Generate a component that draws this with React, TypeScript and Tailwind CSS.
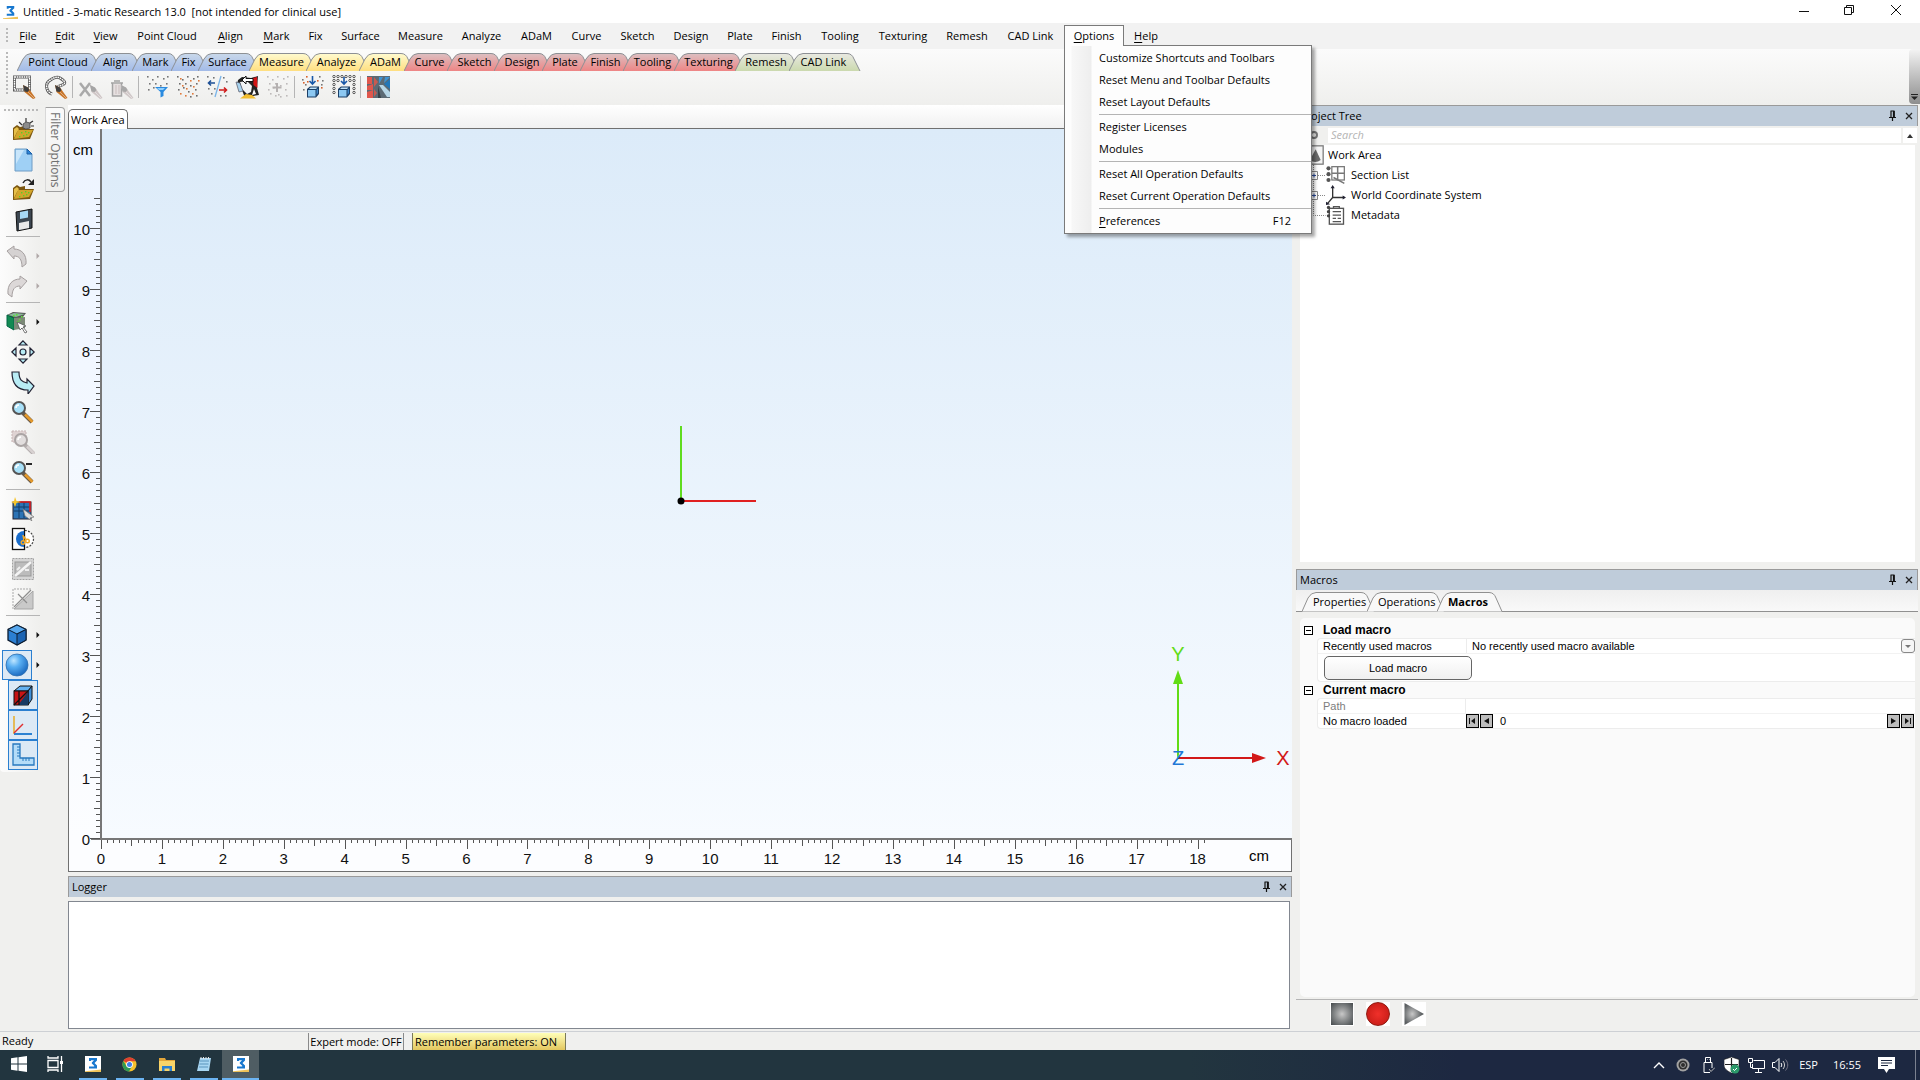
import React from "react";

const UI = "font-['Open_Sans','Noto_Sans',sans-serif]";
const ARIAL = "font-['Liberation_Sans',Arial,sans-serif]";

/* ---------- data ---------- */

const MENUS: { label: string; w: string; key?: boolean }[] = [
  { label: "File", w: "w-[36px]", key: true },
  { label: "Edit", w: "w-[38px]", key: true },
  { label: "View", w: "w-[43px]", key: true },
  { label: "Point Cloud", w: "w-[80px]" },
  { label: "Align", w: "w-[47px]", key: true },
  { label: "Mark", w: "w-[45px]", key: true },
  { label: "Fix", w: "w-[33px]" },
  { label: "Surface", w: "w-[57px]" },
  { label: "Measure", w: "w-[63px]" },
  { label: "Analyze", w: "w-[59px]" },
  { label: "ADaM", w: "w-[51px]" },
  { label: "Curve", w: "w-[49px]" },
  { label: "Sketch", w: "w-[53px]" },
  { label: "Design", w: "w-[54px]" },
  { label: "Plate", w: "w-[44px]" },
  { label: "Finish", w: "w-[49px]" },
  { label: "Tooling", w: "w-[58px]" },
  { label: "Texturing", w: "w-[68px]" },
  { label: "Remesh", w: "w-[60px]" },
  { label: "CAD Link", w: "w-[67px]" },
];

const OPTION_GROUPS: string[][] = [
  ["Customize Shortcuts and Toolbars", "Reset Menu and Toolbar Defaults", "Reset Layout Defaults"],
  ["Register Licenses", "Modules"],
  ["Reset All Operation Defaults", "Reset Current Operation Defaults"],
];

type Tone = "blue" | "yellow" | "red" | "green";
const TABS: { label: string; w: number; tone: Tone }[] = [
  { label: "Point Cloud", w: 74, tone: "blue" },
  { label: "Align", w: 41, tone: "blue" },
  { label: "Mark", w: 39, tone: "blue" },
  { label: "Fix", w: 27, tone: "blue" },
  { label: "Surface", w: 51, tone: "blue" },
  { label: "Measure", w: 57, tone: "yellow" },
  { label: "Analyze", w: 53, tone: "yellow" },
  { label: "ADaM", w: 45, tone: "yellow" },
  { label: "Curve", w: 43, tone: "red" },
  { label: "Sketch", w: 47, tone: "red" },
  { label: "Design", w: 48, tone: "red" },
  { label: "Plate", w: 38, tone: "red" },
  { label: "Finish", w: 43, tone: "red" },
  { label: "Tooling", w: 51, tone: "red" },
  { label: "Texturing", w: 61, tone: "red" },
  { label: "Remesh", w: 54, tone: "green" },
  { label: "CAD Link", w: 61, tone: "green" },
];
const TONES: Record<Tone, [string, string]> = {
  blue: ["#c9d8ea", "#a3bbe8"],
  yellow: ["#fffbd0", "#ffdf80"],
  red: ["#dcc0c2", "#ee8585"],
  green: ["#e9e9e2", "#cbd9ae"],
};

/* ---------- small helpers ---------- */

function Svg({ size = 24, children }: { size?: number; children: React.ReactNode }) {
  return (
    <svg width={size} height={size} viewBox="0 0 24 24" fill="none" aria-hidden="true" className="block shrink-0">
      {children}
    </svg>
  );
}

function Dots({ at, fill, s = 1.6 }: { at: [number, number][]; fill: string; s?: number }) {
  return (
    <>
      {at.map(([x, y], i) => (
        <rect key={i} x={x} y={y} width={s} height={s} fill={fill} />
      ))}
    </>
  );
}

function Brush({ body = "#c8762a", dark = "#3f3f3f" }: { body?: string; dark?: string }) {
  return (
    <g>
      <path d="M11 10l5 2.5 7.5 10.5-2.5 1-8.500-7z" fill={body} />
      <path d="M11 10l5 2.500 1.500 2.500-2 2-3-.5z" fill={dark} />
      <path d="M16 17l6 6" stroke="#fff" strokeOpacity=".4" />
    </g>
  );
}

function Arrow({ dim }: { dim?: boolean }) {
  return (
    <svg width="4" height="6" viewBox="0 0 4 6" className="ml-[4px]" aria-hidden="true">
      <path d="M.5 0L3.500 3L.5 6z" fill={dim ? "#b0a8a8" : "#111"} />
    </svg>
  );
}

function MaticLogo({ size = 16 }: { size?: number }) {
  return (
    <svg width={size} height={size} viewBox="0 0 16 16" aria-hidden="true" className="block shrink-0">
      <rect width="16" height="16" fill="#fff" />
      <path d="M4 2H12V4.500L9.500 7L12 9.500V12.500H4V10.500H9.200V9.800L6.800 7.600V6.600L9 4.200H6V5H4z" fill="#1878cf" />
      <path d="M0 15.200L16 13.600V16H0z" fill="#eec258" />
    </svg>
  );
}

function Pin() {
  return (
    <svg width="9" height="11" viewBox="0 0 9 11" aria-hidden="true">
      <path d="M2.500 1h4M3 1v6M5.500 1v6M6.300 1v6M1 7.500h7M4.500 8v3" stroke="#111" strokeWidth="1.200" fill="none" />
    </svg>
  );
}
function Cross() {
  return (
    <svg width="8" height="8" viewBox="0 0 8 8" aria-hidden="true">
      <path d="M1 1l6 6M7 1L1 7" stroke="#222" strokeWidth="1.300" />
    </svg>
  );
}

function PanelHeader({ title }: { title: string }) {
  return (
    <header className="flex h-[21px] shrink-0 items-center border border-b-0 border-[#9a9a9a] bg-[#bfccda] pr-[4px] pb-px pl-[3px]">
      <h2 className="flex-1 text-[11px] leading-4">{title}</h2>
      <button aria-label={`Pin ${title}`} className="mr-[8px]"><Pin /></button>
      <button aria-label={`Close ${title}`}><Cross /></button>
    </header>
  );
}

/* ---------- toolbar icons ---------- */

const CLOUD: [number, number][] = [[1, 1], [6, 4], [11, 1], [17, 3], [21, 1], [3, 8], [9, 8], [20, 8], [2, 14], [7, 12], [14, 10]];

const IconMarkRect = () => (
  <Svg>
    <rect x="2.500" y="2" width="15" height="13" stroke="#5a5a5a" strokeWidth="3" />
    <rect x="2.500" y="2" width="15" height="13" stroke="#fff" strokeWidth="1.400" strokeDasharray="1.600 .7" />
    <Brush />
  </Svg>
);
const IconMarkLasso = () => (
  <Svg>
    <path d="M8 19C2 17 1 9 5 6s8-5 11-3 6 4 4 6-5 1-6 3" stroke="#5a5a5a" strokeWidth="3" />
    <path d="M8 19C2 17 1 9 5 6s8-5 11-3 6 4 4 6-5 1-6 3" stroke="#fff" strokeWidth="1.400" strokeDasharray="1.600 .7" />
    <Brush />
  </Svg>
);
const IconUnmark = () => (
  <Svg>
    <path d="M1 8l10 13M11 8L1 21" stroke="#a9a9a9" strokeWidth="2.500" />
    <Brush body="#cfc6c6" dark="#a5a5a5" />
  </Svg>
);
const IconTrash = () => (
  <Svg>
    <path d="M3 9h8v12H3z" fill="#e6e0e0" />
    <path d="M1 8h12M4 6h6M2.500 8v13h9V8" stroke="#a3a3a3" strokeWidth="1.500" />
    <path d="M6 10v9M9 10v9" stroke="#c9bdbd" />
    <Brush body="#d0c8c8" dark="#a8a8a8" />
  </Svg>
);
const IconFilter = () => (
  <Svg>
    <Dots at={CLOUD} fill="#777" />
    <path d="M9 12h13l-4.500 5v4l-3 1.500V17z" fill="#2a8be0" />
    <path d="M11 13h8l-2 2h-4z" fill="#8fd0ff" />
  </Svg>
);
const IconScatter = () => (
  <Svg>
    <Dots at={[...CLOUD, [19, 14], [12, 16], [20, 20], [14, 21]]} fill="#6e6e6e" />
    <Dots at={[[4, 3], [14, 5], [6, 10], [17, 11], [10, 13], [4, 18], [16, 18], [9, 20], [22, 5]]} fill="#e07a3c" />
  </Svg>
);
const IconSplit = () => (
  <Svg>
    <Dots at={[[1, 1], [7, 2], [17, 2], [20, 6], [2, 13], [8, 13], [5, 18], [14, 20], [19, 20]]} fill="#777" />
    <path d="M15 1L9 22" stroke="#7ab4e8" strokeWidth="1.300" />
    <path d="M9 8H3M5 5.500L2.500 8 5 10.500" stroke="#1d4f96" strokeWidth="1.600" />
    <path d="M13 15h7M18 12.500l2.500 2.500-2.500 2.500" stroke="#d01c1c" strokeWidth="1.600" />
  </Svg>
);
const IconRegister = () => (
  <Svg>
    <path d="M3 5l4-3 9 1 7-2-1 12 2 7-6 1-8 2-3-8-5-5z" fill="#222" />
    <path d="M5 7l7-1 5 5-1 6-4 2-5-5z" fill="#f2f4f5" />
    <path d="M18 3l4-1 .5 11-4-3z" fill="#d21414" />
    <path d="M7 5l4-4v2.500h7v3h-7V9z" fill="#fff" stroke="#111" />
    <path d="M5 23.500l6-4.500 6 1 4 3.500z" fill="#f2bd2e" />
    <path d="M1 7l4 1 3 8-4 1z" fill="#a8d3ee" stroke="#556" strokeWidth=".7" />
    <path d="M19 14l2 5-4 1z" fill="#fff" />
  </Svg>
);
const IconScatterDim = () => (
  <Svg>
    <Dots at={[...CLOUD, [19, 14], [12, 19], [20, 20], [14, 21], [4, 18], [9, 20]]} fill="#bdb9b9" />
    <path d="M11 8v9M6.500 12.500h9" stroke="#b5b1b1" strokeWidth="2" />
  </Svg>
);
const BlueBox = () => (
  <g>
    <path d="M6 14l3-2.500h9V19l-3 3.500H6z" fill="#1c3f66" />
    <rect x="7" y="15" width="7.500" height="6.500" fill="#8cc8f2" />
    <path d="M8 14l1.500-1.500h7L15 14z" fill="#bfe2fa" />
    <path d="M15.500 15l1.500-1.500V18l-1.500 2z" fill="#3e86c8" />
  </g>
);
const IconCloudToBox = () => (
  <Svg>
    <Dots at={[[1, 4], [4, 9], [18, 1], [20, 9], [2, 14], [21, 5]]} fill="#777" />
    <Dots at={[[5, 1], [2, 7], [16, 5], [20, 12], [6, 6]]} fill="#d9622b" />
    <path d="M11.500 1v8M8.500 6l3 3 3-3" stroke="#1a58a8" strokeWidth="1.600" />
    <BlueBox />
  </Svg>
);
const IconGridToBox = () => (
  <Svg>
    {[0, 4, 8, 12, 16, 20].map((x) =>
      [0, 4, 8, 12, 16].map((y) =>
        (x > 3 && x < 19 && y > 7) || (x > 7 && x < 15 && y > 2) ? null : (
          <circle key={`${x}-${y}`} cx={x + 2} cy={y + 1.500} r="1.200" fill="#fff" stroke="#444" strokeWidth=".9" />
        ),
      ),
    )}
    <path d="M12 2v7M9 6l3 3 3-3" stroke="#1a58a8" strokeWidth="1.600" />
    <BlueBox />
  </Svg>
);
const IconTexture = () => (
  <Svg>
    <rect x="1" y="1" width="23" height="22" fill="#5c6a74" />
    <path d="M1 2h5v7H1zM1 11l6-2v6H1zM1 17l6-2v8H1z" fill="#e0574c" />
    <path d="M8 2l4 5-4 5zM8 14l3 4-3 4z" fill="#c85a50" />
    <path d="M13 2h4l-4 7zM19 2h5l-6 6z" fill="#3f93d2" />
    <path d="M18 9l6-5v10z" fill="#2277b8" />
    <path d="M12 11l3 12h-3z" fill="#384249" />
    <path d="M13 10l8 12h3v-5l-7-7z" fill="#b7d6e6" />
  </Svg>
);

/* ---------- side bar icons ---------- */

const Folder = () => (
  <g>
    <path d="M2 22V10l4-3 3 2 5-1v3h9l-4 10z" fill="#7c5710" />
    <path d="M3 21l4-9h15l-4 7z" fill="#d2a52c" />
    <path d="M3 20V11l3-2 2 2-2 3z" fill="#e6bf4a" />
    <Dots at={[[10, 14], [14, 13], [12, 17], [17, 14], [8, 18], [15, 16]]} fill="#55cf2a" s={1.400} />
  </g>
);
const IconNewProject = () => (
  <Svg>
    <Folder />
    <path d="M8 4l3 3M15 0v4M22 3l-3 2M23 8h-3" stroke="#333" strokeWidth="1.200" />
    <path d="M12 6l3-2 4 1v5l-4 1-3-1z" fill="#8c8c8c" stroke="#444" strokeWidth=".8" />
  </Svg>
);
const IconPage = () => (
  <Svg>
    <path d="M4 1h12l5 5v17H4z" fill="#9fd0f5" stroke="#6f9cc4" />
    <path d="M5 2h8L5 16z" fill="#c9e6fb" />
    <path d="M16 1l5 5h-5z" fill="#2f86d8" stroke="#1b5fa6" />
  </Svg>
);
const IconOpen = () => (
  <Svg>
    <Folder />
    <path d="M12 5c2-4 6-4 8-1" stroke="#222" strokeWidth="1.500" />
    <path d="M23 1v6h-6z" fill="#222" />
  </Svg>
);
const IconSave = () => (
  <Svg>
    <path d="M5 4L21 1v19L6 23z" fill="#3c4650" stroke="#111" />
    <path d="M9 4l8-1.500v7L9 11z" fill="#a6d8f5" />
    <path d="M8 15l10-2v7L8 22z" fill="#e8e8e8" />
  </Svg>
);
const IconUndo = () => (
  <Svg>
    <path d="M2 7l7-5v3c7 0 13 5 12 15l-4 3c0-8-3-11-8-11v3z" fill="#d5d2d2" stroke="#a6a0a0" />
  </Svg>
);
const IconRedo = () => (
  <Svg>
    <path d="M22 7l-7-5v3C8 5 2 10 3 20l4 3c0-8 3-11 8-11v3z" fill="#dcd8d8" stroke="#a6a0a0" />
  </Svg>
);
const IconGreenBox = () => (
  <Svg>
    <path d="M2 5l6-3 13 1-3 4v12H9l-7-4z" fill="#555" />
    <path d="M2 5l7 3v12l-7-4z" fill="#128a52" stroke="#064" />
    <path d="M9 8l11-1v11l-11 2z" fill="#7d8a78" />
    <path d="M3 5l6-2 11 1-9 3z" fill="#8bb89a" />
    <Dots at={[[11, 4], [14, 9], [12, 11], [16, 6], [8, 5]]} fill="#5de03a" />
    <path d="M12 12l9 4-3 1 4 5-2 1-3-5-2 2z" fill="#fff" stroke="#555" strokeWidth=".8" />
  </Svg>
);
const IconPan = () => (
  <Svg>
    <g fill="#b8ecf5" stroke="#223" strokeWidth="1.200">
      <path d="M12 .8l4 4.200H8zM12 23.200L8 19h8zM.8 12L5 8v8zM23.200 12L19 16V8z" />
      <circle cx="12" cy="12" r="3" />
    </g>
  </Svg>
);
const IconRotate = () => (
  <Svg>
    <path d="M1 2h7c0 8 3 10 8 11V9l7 7-6 8v-4C6 20 1 14 1 2z" fill="#b8ecf5" stroke="#223" strokeWidth="1.200" />
  </Svg>
);
const Lens = ({ dim }: { dim?: boolean }) => (
  <g>
    <path d="M12 13l9 9" stroke={dim ? "#b5afaf" : "#6a5a48"} strokeWidth="4" />
    <path d="M14 14.500l7.500 7.500" stroke={dim ? "#d8d2d2" : "#e69a2a"} strokeWidth="2.500" />
    <circle cx="8" cy="8" r="6" fill={dim ? "#e2dede" : "#a8e0f8"} stroke={dim ? "#aaa4a4" : "#555"} strokeWidth="2" />
    <path d="M5 8c0-2 1-3 3-3" stroke="#fff" strokeWidth="1.500" />
  </g>
);
const IconZoom = () => <Svg><Lens /></Svg>;
const IconZoomWindow = () => (
  <Svg>
    <rect x="1" y="1" width="14" height="11" fill="#dfd3d3" stroke="#c7b5b5" strokeDasharray="2 1" />
    <g transform="translate(2 2)"><Lens dim /></g>
  </Svg>
);
const IconZoomOut = () => (
  <Svg>
    <Lens />
    <path d="M15 4h6" stroke="#111" strokeWidth="1.800" />
  </Svg>
);
const IconClipNew = () => (
  <Svg>
    <rect x="2" y="5" width="18" height="17" fill="#2c73b5" stroke="#223" />
    <path d="M3 14h16M8 6v15M13 6v15M3 10h16" stroke="#123d66" />
    <path d="M8 5h11v10" stroke="#e01818" strokeWidth="1.600" />
    <path d="M4 0l1.500 4L10 5 5.500 6 4 10 2.500 6 0 5l3-1z" fill="#f7c52a" />
    <path d="M12 12l11 8-4 1 2 3-7-5z" fill="#ddd" stroke="#777" strokeWidth=".7" />
  </Svg>
);
const IconClip = () => (
  <Svg>
    <circle cx="14" cy="12" r="8.500" fill="#fff" stroke="#444" strokeWidth="1.200" strokeDasharray="2 1.300" />
    <rect x="1.500" y="1.500" width="12" height="21" fill="#fff" stroke="#111" strokeWidth="1.300" />
    <path d="M13 4a8 8 0 0 0 0 16z" fill="#1c6ecb" />
    <g stroke="#f0a92a" strokeWidth="1.400">
      <circle cx="12" cy="15.500" r="1.800" /><circle cx="16.500" cy="14" r="1.800" />
      <path d="M13 14l-1-6M15 12.500l-2-3" />
    </g>
  </Svg>
);
const IconHideDim = () => (
  <Svg>
    <rect x="1.500" y="1.500" width="21" height="21" fill="#d5d5d5" stroke="#a2a2a2" strokeDasharray="2 1" />
    <rect x="4" y="5" width="16" height="14" fill="#bcbcbc" stroke="#999" />
    <path d="M4 19L20 5" stroke="#f4f4f4" strokeWidth="2.500" />
    <path d="M6 13l3-3M14 13h4" stroke="#eee" strokeWidth="2" />
  </Svg>
);
const IconClipDim = () => (
  <Svg>
    <path d="M2 22V2h18" stroke="#a9a9a9" strokeDasharray="2 1" />
    <path d="M3 22L22 4v18z" fill="#c9c9c9" stroke="#a5a5a5" />
    <path d="M7 7l9 9M3 20L20 3" stroke="#8d8d8d" strokeWidth="1.200" />
  </Svg>
);
const IconCube = () => (
  <Svg>
    <path d="M12 2l9 4.500v10.500l-9 5-9-5V6.500z" fill="#2b7fd2" stroke="#0c1c30" strokeWidth="1.300" />
    <path d="M12 2l9 4.500-9 4.500-9-4.500z" fill="#58a8ee" stroke="#0c1c30" />
    <path d="M12 11l9-4.500v10.500l-9 5z" fill="#1c64b2" stroke="#0c1c30" />
  </Svg>
);
const IconSphere = () => (
  <Svg>
    <defs>
      <radialGradient id="ball" cx=".35" cy=".3" r=".75">
        <stop offset="0" stopColor="#bfe6ff" />
        <stop offset=".4" stopColor="#58aef2" />
        <stop offset="1" stopColor="#1766bd" />
      </radialGradient>
    </defs>
    <circle cx="12" cy="12" r="11" fill="url(#ball)" stroke="#2f6fae" strokeWidth=".8" />
  </Svg>
);
const IconRedCube = () => (
  <Svg>
    <path d="M3 8l6-5h12l-4 5z" fill="#63b1f0" stroke="#111" />
    <path d="M17 8l4-5v13l-4 6z" fill="#3f8fd8" stroke="#111" />
    <rect x="3" y="8" width="14" height="14" fill="#c81414" stroke="#111" />
    <path d="M8 21L17 9v13H8z" fill="#173a63" />
    <path d="M8 8v14M3 22L17 8" stroke="#111" strokeWidth="1.300" />
  </Svg>
);
const IconAxes = () => (
  <Svg>
    <path d="M3 3v18" stroke="#e5b64a" strokeWidth="1.800" />
    <path d="M3 21h18" stroke="#2c82d2" strokeWidth="2" />
    <path d="M3 20l9-9" stroke="#e03030" strokeWidth="1.500" />
  </Svg>
);
const IconRuler = () => (
  <Svg>
    <path d="M2 1h7v14h14v7H2z" fill="#b4dcf8" stroke="#2778be" strokeWidth="1.300" />
    <path d="M6 4h3M6 7h3M6 10h3M6 13h3M12 15v3M15 15v3M18 15v3" stroke="#2778be" />
  </Svg>
);

/* ---------- title, menus, ribbon ---------- */

function TitleBar() {
  return (
    <header className="flex h-[23px] shrink-0 items-center bg-white pl-[3px]">
      <MaticLogo size={15} />
      <h1 className="ml-[5px] flex-1 whitespace-pre text-[11px] leading-4">Untitled - 3-matic Research 13.0  [not intended for clinical use]</h1>
      <div className="flex pb-[4px]">
        <button aria-label="Minimize" className="flex h-4 w-[45px] items-center justify-center">
          <svg width="10" height="10"><path d="M0 6.500h10" stroke="#111" /></svg>
        </button>
        <button aria-label="Restore" className="flex h-4 w-[45px] items-center justify-center">
          <svg width="10" height="10" fill="none" stroke="#111"><path d="M.5 2.500h7v7h-7zM2.500 2V.5h7v7H8" /></svg>
        </button>
        <button aria-label="Close" className="flex h-4 w-[49px] items-center justify-center">
          <svg width="10" height="10" stroke="#111"><path d="M0 0l10 10M10 0L0 10" /></svg>
        </button>
      </div>
    </header>
  );
}

function Mnemonic({ text }: { text: string }) {
  return <><span className="underline underline-offset-2">{text[0]}</span>{text.slice(1)}</>;
}

function OptionsMenu() {
  return (
    <ul role="menu" className="absolute top-[19px] left-[-1px] z-40 w-[248px] border border-[#7a7a7a] bg-[linear-gradient(90deg,#fdfdfd_6px,#f7f7f7_7px,#eeeeee_26px,#fdfdfd_27px)] py-[1px] shadow-[3px_3px_3px_rgba(0,0,0,0.35)]">
      {OPTION_GROUPS.map((group, i) => (
        <React.Fragment key={i}>
          {group.map((item) => (
            <li key={item} role="none">
              <button role="menuitem" className="block h-[22px] w-full pl-[34px] text-left whitespace-nowrap">{item}</button>
            </li>
          ))}
          <li role="separator" className="mb-px ml-[34px] h-[2px] border-b border-[#b4b4b4]" />
        </React.Fragment>
      ))}
      <li role="none">
        <button role="menuitem" className="flex h-[22px] w-full items-center justify-between pr-[20px] pl-[34px]">
          <span><Mnemonic text="Preferences" /></span>
          <span>F12</span>
        </button>
      </li>
    </ul>
  );
}

function MenuBar() {
  return (
    <nav aria-label="Menu" className="flex h-[26px] shrink-0 items-center bg-[#f2f2f2] text-[11px] leading-4">
      <Grip />
      {MENUS.map((m) => (
        <button key={m.label} className={`${m.w} h-5 text-center whitespace-nowrap`}>
          {m.key ? <Mnemonic text={m.label} /> : m.label}
        </button>
      ))}
      <div className="relative h-[22px] w-[60px] self-start">
        <div className="relative mt-[2px] h-5 border border-b-0 border-[#7a7a7a] bg-[#fdfdfd]">
          <button aria-haspopup="menu" aria-expanded="true" className="relative z-50 h-5 w-full bg-[#fdfdfd] pb-px text-center">
            <Mnemonic text="Options" />
          </button>
          <OptionsMenu />
        </div>
      </div>
      <button className="h-5 w-[44px] text-center"><Mnemonic text="Help" /></button>
    </nav>
  );
}

function Grip() {
  return <span className="mr-[2px] ml-[6px] h-4 w-[2px] shrink-0 bg-[repeating-linear-gradient(180deg,#b9b9b9_0_2px,transparent_2px_4px)]" />;
}

function RibbonTab({ label, w, tone }: { label: string; w: number; tone: Tone }) {
  const id = `tab-${label.replace(" ", "")}`;
  return (
    <button role="tab" className="relative h-[18px] shrink-0" style={{ width: w }}>
      <svg width={w + 12} height="18" className="absolute top-0 left-0" aria-hidden="true">
        <defs>
          <linearGradient id={id} x1="0" x2="0" y1="0" y2="1">
            <stop offset="0" stopColor={TONES[tone][0]} />
            <stop offset="1" stopColor={TONES[tone][1]} />
          </linearGradient>
        </defs>
        <path
          d={`M0 18L6 6Q9 .5 14 .5H${w - 3}Q${w + 2} .5 ${w + 4} 6L${w + 10} 18`}
          fill={`url(#${id})`}
          stroke="#8d9094"
        />
      </svg>
      <span className="relative z-10 flex h-[17px] justify-center pl-[8px] leading-[15px] whitespace-nowrap">{label}</span>
    </button>
  );
}

const RIBBON: ({ label: string; icon: React.ReactNode; gap: string } | null)[] = [
  { label: "Mark rectangle", icon: <IconMarkRect />, gap: "ml-0" },
  { label: "Mark lasso", icon: <IconMarkLasso />, gap: "ml-[8px]" },
  null,
  { label: "Unmark", icon: <IconUnmark />, gap: "ml-[6px]" },
  { label: "Delete marked", icon: <IconTrash />, gap: "ml-[7px]" },
  null,
  { label: "Filter points", icon: <IconFilter />, gap: "ml-[7px]" },
  { label: "Resample points", icon: <IconScatter />, gap: "ml-[6px]" },
  { label: "Split points", icon: <IconSplit />, gap: "ml-[6px]" },
  { label: "Register points", icon: <IconRegister />, gap: "ml-[5px]" },
  { label: "Merge points", icon: <IconScatterDim />, gap: "ml-[7px]" },
  null,
  { label: "Wrap points", icon: <IconCloudToBox />, gap: "ml-[6px]" },
  { label: "Grid to part", icon: <IconGridToBox />, gap: "ml-[7px]" },
  null,
  { label: "Texture map", icon: <IconTexture />, gap: "ml-[5px]" },
];

function Ribbon() {
  return (
    <div className="flex h-14 shrink-0 bg-linear-to-b from-[#fbfbfb] to-[#efefed]">
      <span className="mt-[3px] ml-[6px] h-[44px] w-[2px] bg-[repeating-linear-gradient(180deg,#b9b9b9_0_2px,transparent_2px_4px)]" />
      <div className="flex-1">
        <div role="tablist" aria-label="Toolbars" className="mt-1 ml-[9px] flex text-[11px]">
          {TABS.map((t) => <RibbonTab key={t.label} {...t} />)}
        </div>
        <div className="mt-[4px] ml-[4px] flex items-center">
          {RIBBON.map((r, i) =>
            r ? (
              <button key={i} aria-label={r.label} className={r.gap}>{r.icon}</button>
            ) : (
              <span key={i} className="ml-[4px] h-[22px] w-px bg-[#b5b5b5]" />
            ),
          )}
        </div>
      </div>
      <button aria-label="More tools" className="flex h-[55px] w-[11px] items-end justify-center rounded-l-sm bg-linear-to-b from-[#f4f4f4] to-[#8e8e8e] pb-1">
        <svg width="7" height="6"><path d="M0 .5h7" stroke="#222" /><path d="M0 2.500h7L3.500 6z" fill="#222" /></svg>
      </button>
    </div>
  );
}

/* ---------- side bar ---------- */

function SideButton({ label, icon, menu, dim, on }: { label: string; icon: React.ReactNode; menu?: boolean; dim?: boolean; on?: boolean }) {
  return (
    <div className={`flex h-[30px] items-center ${menu ? "pl-[2px]" : "pl-[8px]"}`}>
      <button aria-label={label} aria-pressed={on} className={`flex h-[30px] w-[30px] items-center justify-center border ${on ? "border-[#2a7fd0] bg-[#dce9f5]" : "border-transparent"}`}>
        {icon}
      </button>
      {menu && <Arrow dim={dim} />}
    </div>
  );
}
const SideRule = () => <div className="mb-[4px] ml-[6px] h-[2px] border-b border-[#b5b5b5]" />;

function SideBar() {
  return (
    <aside className="flex w-[68px] shrink-0 items-start bg-[#f0f0ee]">
      <div className="w-[40px] rounded-b bg-linear-to-r from-[#fcfcfc] to-[#efefed] pb-[2px]">
        <div className="mt-[4px] mb-[4px] ml-[4px] h-[2px] w-[35px] bg-[repeating-linear-gradient(90deg,#b9b9b9_0_2px,transparent_2px_4px)]" />
        <SideButton label="New project" icon={<IconNewProject />} />
        <SideButton label="New page" icon={<IconPage />} />
        <SideButton label="Open" icon={<IconOpen />} />
        <SideButton label="Save" icon={<IconSave />} />
        <SideRule />
        <SideButton label="Undo" icon={<IconUndo />} menu dim />
        <SideButton label="Redo" icon={<IconRedo />} menu dim />
        <SideRule />
        <SideButton label="Select" icon={<IconGreenBox />} menu />
        <SideButton label="Pan" icon={<IconPan />} />
        <SideButton label="Rotate" icon={<IconRotate />} />
        <SideButton label="Zoom" icon={<IconZoom />} />
        <SideButton label="Zoom window" icon={<IconZoomWindow />} />
        <SideButton label="Unzoom" icon={<IconZoomOut />} />
        <div className="h-px" />
        <SideRule />
        <SideButton label="New clip" icon={<IconClipNew />} />
        <SideButton label="Clip" icon={<IconClip />} />
        <SideButton label="Hide" icon={<IconHideDim />} />
        <SideButton label="Clip plane" icon={<IconClipDim />} />
        <SideRule />
        <SideButton label="View cube" icon={<IconCube />} menu />
        <SideButton label="Shading" icon={<IconSphere />} menu on />
        <SideButton label="Perspective" icon={<IconRedCube />} on />
        <SideButton label="Axes" icon={<IconAxes />} on />
        <SideButton label="Ruler" icon={<IconRuler />} on />
      </div>
      <button className="mt-[2px] ml-[5px] flex h-[85px] w-5 items-center justify-center rounded-r-[4px] border border-[#a0a0a0] border-l-[#d8d8d8] bg-linear-to-b from-[#fafafa] to-[#efefed] text-[12px] text-[#6f6f6f] [writing-mode:vertical-rl]">
        Filter Options
      </button>
    </aside>
  );
}

/* ---------- work area ---------- */

const CM_V = 61;
const CM_H = 60.92;

function VerticalRuler() {
  const h = 650;
  return (
    <div className="z-10 flex w-[31px] flex-col justify-between bg-linear-to-b from-[#edf4ff] to-[#fcfdff]">
      <span className="mt-[13px] ml-[4px] h-0 text-[15px] leading-4">cm</span>
      <svg width="31" height={h} className="block overflow-visible" aria-hidden="true">
        {Array.from({ length: 106 }, (_, i) => {
          const y = Math.round(h - (i * CM_V) / 10) + 0.5;
          const len = i % 10 === 0 ? 10 : i % 5 === 0 ? 6 : 4;
          return <path key={i} d={`M${31 - len} ${y}H31`} stroke="#555" />;
        })}
        {Array.from({ length: 11 }, (_, n) => (
          <text key={n} x="21" y={h - n * CM_V + 7} textAnchor="end" fontSize="15" fill="#111">{n}</text>
        ))}
      </svg>
    </div>
  );
}

function HorizontalRuler() {
  return (
    <div className="flex h-[34px] justify-between border-r border-b border-[#707070] bg-[#fcfdff]">
      <svg width="1150" height="32" className="block shrink-0 overflow-visible" aria-hidden="true">
        {Array.from({ length: 182 }, (_, i) => {
          const x = Math.round(32 + (i * CM_H) / 10) + 0.5;
          const y2 = i % 10 === 0 ? 11 : i % 5 === 0 ? 8 : 5;
          return <path key={i} d={`M${x} 2V${y2}`} stroke="#555" />;
        })}
        {Array.from({ length: 19 }, (_, n) => (
          <text key={n} x={32 + n * CM_H} y="26" textAnchor="middle" fontSize="15" fill="#111">{n}</text>
        ))}
      </svg>
      <span className="pt-[10px] pr-[22px] text-[15px] leading-4">cm</span>
    </div>
  );
}

function WorkArea() {
  return (
    <section aria-label="Work Area" className="flex min-h-0 flex-1 flex-col">
      <div role="tablist" className="flex h-6 shrink-0 items-end border-b border-[#707070] bg-linear-to-b from-white to-[#f1f1f1]">
        <button role="tab" aria-selected="true" className="mb-[-1px] h-[20px] rounded-t-[5px] border border-b-0 border-[#6b6b6b] bg-white px-[2px] text-[11px] leading-[18px] whitespace-nowrap">Work Area</button>
      </div>
      <div className={`${ARIAL} relative flex min-h-0 flex-1 flex-col border-l border-[#707070]`}>
        <div className="flex min-h-0 flex-1">
          <VerticalRuler />
          <div className="flex-1 border-l-2 border-[#777] bg-linear-to-b from-[#dcebf9] to-[#f7fbff]" />
        </div>
        <div className="relative">
          <div className="absolute top-0 right-0 left-[22px] h-[2px] bg-[#777]" />
          <HorizontalRuler />
        </div>
        <svg width="152" height="152" viewBox="-76 -76 152 152" className="absolute top-1/2 left-1/2 -translate-x-1/2 -translate-y-1/2" aria-hidden="true">
          <path d="M0 0V-75" stroke="#5fdc1f" strokeWidth="2" />
          <path d="M0 0H75" stroke="#e02020" strokeWidth="2" />
          <circle r="3.500" fill="#000" />
        </svg>
        <svg width="126" height="128" viewBox="-12 -114 126 128" className="absolute right-0 bottom-[100px]" aria-hidden="true">
          <path d="M0 0V-75" stroke="#62dc16" strokeWidth="2" />
          <path d="M0-88l5 14H-5z" fill="#62dc16" />
          <path d="M0 0H74" stroke="#d21818" strokeWidth="2" />
          <path d="M88 0L74-5V5z" fill="#d21818" />
          <text x="0" y="-97" textAnchor="middle" fontSize="20" fill="#62dc16">Y</text>
          <text x="105" y="7" textAnchor="middle" fontSize="20" fill="#d21818">X</text>
          <text x="0" y="7" textAnchor="middle" fontSize="20" fill="#1f78d6">Z</text>
        </svg>
      </div>
    </section>
  );
}

/* ---------- right panels ---------- */

function TreeIcon({ children }: { children: React.ReactNode }) {
  return <Svg size={20}>{children}</Svg>;
}

function ProjectTree() {
  return (
    <section aria-label="Project Tree" className="flex h-[457px] shrink-0 flex-col">
      <PanelHeader title="Project Tree" />
      <div className="flex h-[19px] shrink-0 items-center pl-[13px]">
        <svg width="14" height="12" aria-hidden="true"><circle cx="5" cy="5" r="3" fill="none" stroke="#777" strokeWidth="2" /></svg>
        <input type="search" aria-label="Search project tree" placeholder="Search" className="ml-[5px] h-[15px] min-w-0 flex-1 bg-white px-[3px] text-[11px] italic outline-none placeholder:text-[#b4b4b4]" />
        <button aria-label="Scroll up" className="mr-px ml-[2px] flex h-[15px] w-[14px] items-center justify-center bg-white">
          <svg width="6" height="4"><path d="M0 4L3 0l3 4z" fill="#333" /></svg>
        </button>
      </div>
      <ul role="tree" className="mr-[3px] ml-[4px] flex-1 bg-white text-[11px] leading-5">
        <li role="treeitem" className="flex h-5 items-center pl-[4px]">
          <TreeIcon>
            <rect x="1" y="1" width="22" height="22" fill="#f4f4f4" stroke="#777" strokeWidth="1.500" />
            <path d="M7 18l7-13 6 13c-4 3-9 3-13 0z" fill="#6c6c6c" />
          </TreeIcon>
          <span className="ml-[4px]">Work Area</span>
        </li>
        <TreeRow label="Section List" expandable>
          <rect x="7" y="2" width="15" height="16" stroke="#777" strokeWidth="1.500" />
          <path d="M14 2v16M7 10h15M9 15l13 7" stroke="#777" strokeWidth="1.800" />
          <circle cx="3" cy="4" r="2.500" fill="#555" /><circle cx="3" cy="11" r="2.500" fill="#555" /><circle cx="3" cy="18" r="2.500" fill="#555" />
        </TreeRow>
        <TreeRow label="World Coordinate System" expandable>
          <path d="M8 2v13h14M8 15l-6 7" stroke="#333" strokeWidth="1.600" />
          <path d="M5.500 4L8 0l2.500 4zM20 12.500l4 2.500-4 2.500zM0 20l5 3-5 1z" fill="#223" />
        </TreeRow>
        <TreeRow label="Metadata">
          <rect x="4" y="4" width="17" height="19" fill="#fff" stroke="#555" strokeWidth="1.600" />
          <path d="M9 4V2h7v2M8 8h10M8 12h10M8 16h4M14 16h4M8 20h10" stroke="#555" strokeWidth="1.500" />
          <circle cx="3" cy="3" r="2" fill="#444" /><circle cx="3" cy="8" r="2" fill="#444" /><circle cx="3" cy="13" r="2" fill="#444" />
        </TreeRow>
      </ul>
    </section>
  );
}

function TreeRow({ label, expandable, children }: { label: string; expandable?: boolean; children: React.ReactNode }) {
  return (
    <li role="treeitem" className="flex h-5 items-center pl-[10px]">
      <svg width="16" height="20" aria-hidden="true">
        <path d={expandable ? "M3.500 0v20M4 10.500h12" : "M3.500 0v10.500h12"} stroke="#888" fill="none" strokeDasharray="1 1" />
        {expandable && <path d="M.5 6.500h7v8h-7z" fill="#fff" stroke="#888" />}
        {expandable && <path d="M2 10.500h4M4 8.500v4" stroke="#2a4a9a" />}
      </svg>
      <TreeIcon>{children}</TreeIcon>
      <span className="ml-[5px]">{label}</span>
    </li>
  );
}

function PanelTab({ label, w, active }: { label: string; w: number; active?: boolean }) {
  return (
    <button role="tab" aria-selected={!!active} className="relative h-[20px]" style={{ width: w }}>
      <svg width={w + 12} height="20" className="absolute top-0 left-0" aria-hidden="true">
        <path d={`M0 19.500L6 6Q9 .5 14 .5H${w - 6}Q${w - 1} .5 ${w + 1} 6L${w + 7} 19.500`} fill="#f8f8f8" stroke="#909090" />
      </svg>
      <span className={`relative block pl-[11px] text-left whitespace-nowrap ${active ? "font-bold" : ""}`}>{label}</span>
    </button>
  );
}

function GroupTitle({ children }: { children: React.ReactNode }) {
  return (
    <h3 className="flex h-4 items-center pl-[4px] text-[12px] font-bold">
      <button aria-label="Collapse" className="flex h-[9px] w-[9px] items-center justify-center border border-black bg-white"><span className="h-px w-[5px] bg-black" /></button>
      <span className="ml-[10px]">{children}</span>
    </h3>
  );
}

function StepButton({ label, d }: { label: string; d: string }) {
  return (
    <button aria-label={label} className="flex h-[14px] w-[13px] items-center justify-center border border-black bg-[#bdbdbd]">
      <svg width="7" height="6" aria-hidden="true"><path d={d} fill="#111" /></svg>
    </button>
  );
}

function Macros() {
  return (
    <section aria-label="Macros" className="mt-[7px] flex min-h-0 flex-1 flex-col">
      <PanelHeader title="Macros" />
      <div role="tablist" className="flex h-[22px] shrink-0 border-b border-[#909090] bg-linear-to-b from-[#efefef] to-[#f9f9f9] pt-[2px] pl-[6px] text-[11px] leading-[18px]">
        <PanelTab label="Properties" w={65} />
        <PanelTab label="Operations" w={70} />
        <PanelTab label="Macros" w={58} active />
      </div>
      <div className={`${ARIAL} mt-[6px] mr-[3px] ml-[4px] min-h-0 flex-1 rounded-[5px] bg-[#fafafa] pt-1 text-[11px] leading-[14px]`}>
        <GroupTitle>Load macro</GroupTitle>
        <div className="ml-[17px] rounded-l border border-r-0 border-[#ececec] bg-white">
          <div className="flex h-[14px] items-center">
            <label htmlFor="recent" className="w-[148px] pl-[5px]">Recently used macros</label>
            <output id="recent" className="flex-1 border-l border-[#ececec] pl-[5px]">No recently used macro available</output>
            <button aria-label="Recent macros" className="flex h-[14px] w-[14px] items-center justify-center rounded-[3px] border border-[#888] bg-[#f6f6f6]">
              <svg width="6" height="3"><path d="M0 0h6L3 3z" fill="#777" /></svg>
            </button>
          </div>
          <div className="border-t border-[#f2f2f2] pt-[2px] pb-px pl-[6px]">
            <button className="h-6 w-[148px] rounded-[5px] border border-[#666] bg-linear-to-b from-white to-[#f0f0f0]">Load macro</button>
          </div>
        </div>
        <GroupTitle>Current macro</GroupTitle>
        <div className="ml-[17px] rounded-l border border-r-0 border-[#ececec] bg-white">
          <div className="flex h-[14px] text-[#7d7d7d]"><span className="w-[148px] border-r border-[#ececec] pl-[5px]">Path</span></div>
          <div className="flex h-[15px] items-center border-t border-[#f2f2f2]">
            <span className="w-[148px] pl-[5px]">No macro loaded</span>
            <StepButton label="First" d="M0 0h1v6H0zM6 0v6L2 3z" />
            <span className="w-px" />
            <StepButton label="Previous" d="M6 0v6L1 3z" />
            <span className="ml-[7px] flex-1">0</span>
            <StepButton label="Next" d="M1 0v6l5-3z" />
            <span className="w-px" />
            <span className="mr-px"><StepButton label="Last" d="M6 0h1v6H6zM1 0v6l4-3z" /></span>
          </div>
        </div>
      </div>
      <div className="mt-[2px] flex h-[32px] shrink-0 gap-[12px] border-t border-[#b5b5b5] pt-[2px] pl-[34px]">
        <button aria-label="Stop" className="h-6 w-6 bg-white p-px"><span className="block h-full w-full bg-radial from-[#c8c8c8] to-[#454a4c]" /></button>
        <button aria-label="Record" className="h-6 w-6 bg-white"><span className="block h-full w-full rounded-full border border-[#8e1a10] bg-radial from-[#f0302a] to-[#c01812]" /></button>
        <button aria-label="Play" className="h-6 w-6 bg-white">
          <svg width="24" height="24">
            <defs><radialGradient id="play" cx=".4"><stop offset="0" stopColor="#c8c8c8" /><stop offset="1" stopColor="#5a5e60" /></radialGradient></defs>
            <path d="M2.500 1v22L22 12z" fill="url(#play)" />
          </svg>
        </button>
      </div>
    </section>
  );
}

/* ---------- bottom ---------- */

function StatusBar() {
  return (
    <footer className="flex h-[19px] shrink-0 items-end border-t border-[#cdd0d4] bg-[#f0f0ee] text-[11px] leading-4">
      <span className="w-[308px] pb-px pl-[2px]">Ready</span>
      <span className="flex h-[17px] w-[96px] justify-center border-x border-[#8a8a8a] pt-px whitespace-nowrap">Expert mode: OFF</span>
      <span className="ml-[8px] h-[17px] w-[154px] border-x border-[#7a7a5a] bg-linear-to-b from-[#ffffb8] to-[#e3c75e] pt-px pl-[2px] whitespace-nowrap">Remember parameters: ON</span>
    </footer>
  );
}

function TaskButton({ label, children, active, open }: { label: string; children: React.ReactNode; active?: boolean; open?: boolean }) {
  return (
    <button aria-label={label} className={`flex h-full w-[37px] flex-col items-center justify-between ${active ? "bg-[#4f5d63]" : ""}`}>
      <span className="flex h-[28px] items-center">{children}</span>
      <span className={`h-[2px] ${active ? "w-full" : "w-[28px]"} ${open ? "bg-[#6cb4f2]" : ""}`} />
    </button>
  );
}

function TaskBar() {
  return (
    <nav aria-label="Taskbar" className="flex h-[30px] shrink-0 items-stretch bg-[linear-gradient(90deg,#22353f_0%,#22353f_62%,#1d2841_76%)] text-[11px] text-white">
      <TaskButton label="Start">
        <svg width="16" height="16" fill="#fff"><path d="M0 2.300l6.500-1v6.200H0zM7.500 1.200L16 0v7.500H7.500zM0 8.500h6.500v6.200L0 13.800zM7.500 8.500H16V16l-8.500-1.200z" /></svg>
      </TaskButton>
      <TaskButton label="Task view">
        <svg width="18" height="16" fill="none" stroke="#fff" strokeWidth="1.300"><path d="M1 4.500h10v7H1zM1 0v2h10V0M1 16v-2h10v2M14.500 0v16" /><path d="M13 5h3v3h-3z" fill="#fff" stroke="none" /></svg>
      </TaskButton>
      <TaskButton label="3-matic" open><MaticLogo /></TaskButton>
      <TaskButton label="Chrome" open>
        <svg width="15" height="15" viewBox="0 0 16 16"><circle cx="8" cy="8" r="7.500" fill="#f6c12c" /><path d="M8 8L1.500 4.200A7.500 7.500 0 0 1 14.500 4.400L8 4.500z" fill="#df4030" /><path d="M1.500 4.200A7.500 7.500 0 0 0 7.500 15.500L10.500 10 5 10z" fill="#2f9a54" /><circle cx="8" cy="8" r="3.600" fill="#fff" /><circle cx="8" cy="8" r="2.700" fill="#3f82ea" /></svg>
      </TaskButton>
      <TaskButton label="File Explorer" open>
        <svg width="16" height="15"><path d="M0 1h6l1 2h9v11H0z" fill="#e3a63a" /><path d="M0 4h16v10H0z" fill="#f9d468" /><path d="M3 9h10v5h-2.500v-2.500h-5V14H3z" fill="#2a7fd0" /></svg>
      </TaskButton>
      <TaskButton label="Notepad" open>
        <svg width="16" height="16"><path d="M4 2h11l-2 13H1z" fill="#a8d6f2" /><path d="M4 5h9M3.500 8h9M3 11h9" stroke="#5a94bc" /><path d="M5 1v2M7.500 1v2M10 1v2M12.500 1v2" stroke="#e8e8e8" /></svg>
      </TaskButton>
      <TaskButton label="3-matic Research" open active><MaticLogo /></TaskButton>
      <div className="ml-auto flex items-center">
        <svg width="12" height="8" className="mr-[11px]" fill="none" stroke="#fff" strokeWidth="1.400"><path d="M1 7l5-5 5 5" /></svg>
        <svg width="14" height="14" className="mr-[13px]"><circle cx="7" cy="7" r="6.500" fill="#a2a2a2" /><circle cx="7" cy="7" r="4.500" fill="#2e2e2e" /><circle cx="7" cy="7" r="2.500" fill="none" stroke="#999" /></svg>
        <svg width="12" height="16" className="mr-[9px]" fill="none" stroke="#fff"><path d="M2.500 5.500V.5h5v5M1 5.500h8V11M7 15.500H1v-10M4 2.500h.5M6 2.500h.5" /><path d="M6 12l2 2.500 4-4" stroke="#bbb" /></svg>
        <svg width="16" height="17" className="mr-[8px]"><path d="M7.500 0L15 2.500V8c0 4-4 6.500-7.500 8C4 14.500 0 12 0 8V2.500z" fill="#fff" stroke="#111" strokeWidth=".6" /><path d="M7.500 1v14M1 7.500h13" stroke="#222" strokeWidth="1.200" /><circle cx="11" cy="12" r="4.500" fill="#2c9a6a" /><path d="M9 12l1.500 1.500L13 11" stroke="#fff" fill="none" /></svg>
        <svg width="17" height="15" className="mr-[7px]" fill="none" stroke="#fff"><path d="M5.500 2.500h11v8H4.500V6M10.500 10.500V14M7 14.500h7M.5.500h4v4h-4zM2.500 5v4.500H4" /></svg>
        <svg width="17" height="14" className="mr-[10px]" fill="none" stroke="#fff"><path d="M.5 4.500H3l4-4v13l-4-4H.5zM9 5c1 1.500 1 2.500 0 4" /><path d="M11 3c2 2.500 2 5.500 0 8" stroke="#ccc" /><path d="M13.500 1.500c3 3.500 3 7.500 0 11" stroke="#778" /></svg>
        <button className="mr-[15px]">ESP</button>
        <time className="mr-[17px]">16:55</time>
        <button aria-label="Notifications" className="mr-[20px]"><svg width="17" height="16"><path d="M0 0h17v12h-6l-2.500 4L6 12H0z" fill="#fff" /><path d="M3 3.500h11M3 6h11M3 8.500h7" stroke="#1d2841" /></svg></button>
        <span className="mr-[4px] h-[30px] w-px bg-[#7b8190]" />
      </div>
    </nav>
  );
}

export default function App() {
  return (
    <div className={`${UI} flex h-screen min-h-[900px] flex-col overflow-hidden bg-[#f0f0ee] text-black`}>
      <TitleBar />
      <MenuBar />
      <Ribbon />
      <main className="flex min-h-0 flex-1">
        <SideBar />
        <div className="flex min-w-0 flex-1 flex-col">
          <WorkArea />
          <section aria-label="Logger" className="mt-[4px] shrink-0">
            <PanelHeader title="Logger" />
            <textarea aria-label="Log output" readOnly className="mt-[4px] mb-[2px] block h-[128px] w-[calc(100%-2px)] resize-none border border-[#828790] bg-white outline-none" />
          </section>
        </div>
        <div className="mr-[2px] ml-[4px] flex w-[622px] shrink-0 flex-col">
          <ProjectTree />
          <Macros />
        </div>
      </main>
      <StatusBar />
      <TaskBar />
    </div>
  );
}
